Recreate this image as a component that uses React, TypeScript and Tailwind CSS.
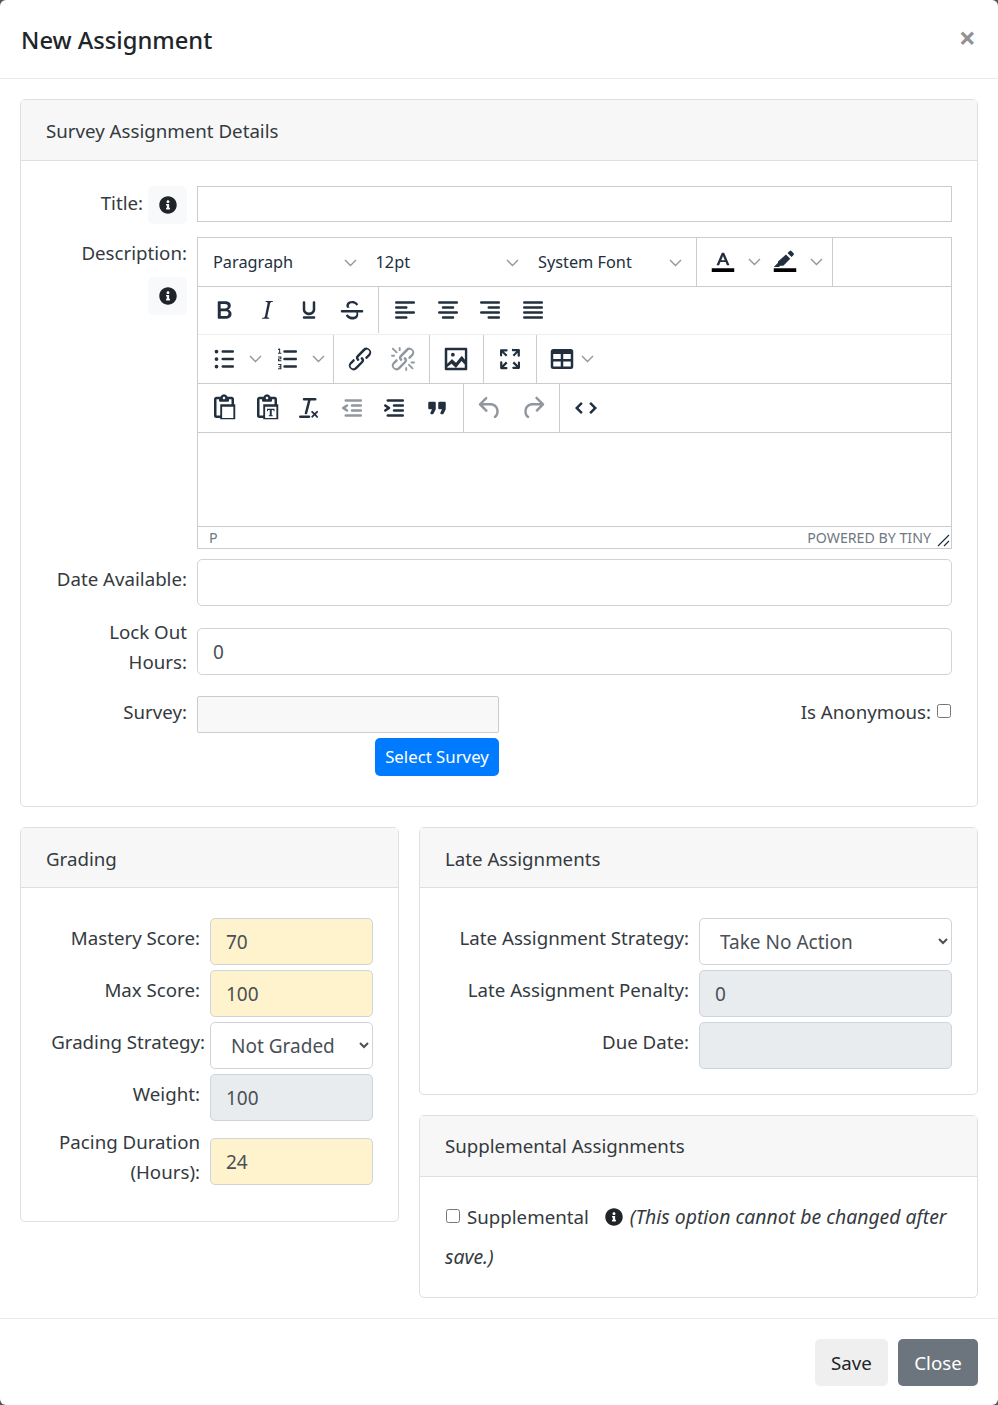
import type { ReactNode } from "react";
import { FaInfoCircle } from "react-icons/fa";

const paths: Record<string, string> = {
  bold: "M7.8 19c-.3 0-.5 0-.6-.2l-.2-.5V5.7c0-.2 0-.4.2-.5l.6-.2h5c1.500 0 2.700.3 3.500 1 .7.6 1.100 1.400 1.100 2.500a3 3 0 0 1-.6 1.900c-.4.6-1 1-1.600 1.200.4.1.9.3 1.300.6s.8.7 1 1.200c.4.4.5 1 .5 1.600 0 1.300-.4 2.300-1.300 3-.8.7-2.100 1-3.800 1H7.800zm5-8.300c.6 0 1.200-.1 1.600-.5.4-.3.6-.7.6-1.300 0-1.100-.8-1.700-2.300-1.700H9.300v3.500h3.500zm.5 6c.7 0 1.300-.1 1.700-.4.4-.4.6-.9.6-1.500s-.2-1-.7-1.400c-.4-.3-1-.4-2-.4H9.400v3.800h3.900z",
  italic: "M16.700 4.700l-.1.9h-.3c-.6 0-1 0-1.400.3-.3.3-.4.6-.5 1.100l-2.100 9.800v.6c0 .5.4.8 1.400.8h.2l-.2.8H8l.2-.8h.2c1.100 0 1.800-.5 2-1.500l2-9.800.1-.5c0-.6-.4-.8-1.400-.8h-.3l.2-.9h5.800z",
  underline: "M16 5c.6 0 1 .4 1 1v5.500a4 4 0 0 1-.4 1.800l-1 1.400a5.300 5.300 0 0 1-5.500 1 5 5 0 0 1-1.600-1c-.5-.4-.8-.9-1.100-1.400a4 4 0 0 1-.4-1.800V6c0-.6.4-1 1-1s1 .4 1 1v5.500c0 .3 0 .6.2 1l.6.7a3.300 3.300 0 0 0 2.200.8 3.400 3.400 0 0 0 2.200-.8c.3-.2.4-.5.6-.8l.2-.9V6c0-.6.4-1 1-1zM8 17h8c.6 0 1 .4 1 1s-.4 1-1 1H8a1 1 0 0 1 0-2z",
  strike: "M15.600 8.500c-.5-.7-1-1.100-1.300-1.300-.6-.4-1.300-.6-2-.6-2.700 0-2.800 1.700-2.800 2.100 0 .6.2 1.100.7 1.500H8.100c-.4-.5-.6-1-.6-1.600 0-.7.3-3.800 4.800-3.800 1.400 0 2.600.5 3.400 1.200.3.2.8.7 1.300 1.400l-1.400 1.100zM4 12h16c.6 0 1 .4 1 1s-.4 1-1 1h-3.300c.2.5.3 1 .3 1.500 0 1.400-.7 4.100-5 4.100A6.200 6.200 0 0 1 7 16.400l1.500-1.100c.4.6 1.600 2 3.700 2 1.600 0 2.500-.4 3-1 .3-.4.4-.9.4-1.300 0-.4-.1-.7-.3-1H4a1 1 0 0 1 0-2z",
  alignLeft: "M5 5h14c.6 0 1 .4 1 1s-.4 1-1 1H5a1 1 0 1 1 0-2zm0 4h8c.6 0 1 .4 1 1s-.4 1-1 1H5a1 1 0 1 1 0-2zm0 8h8c.6 0 1 .4 1 1s-.4 1-1 1H5a1 1 0 0 1 0-2zm0-4h14c.6 0 1 .4 1 1s-.4 1-1 1H5a1 1 0 0 1 0-2z",
  alignCenter: "M5 5h14c.6 0 1 .4 1 1s-.4 1-1 1H5a1 1 0 1 1 0-2zm3 4h8c.6 0 1 .4 1 1s-.4 1-1 1H8a1 1 0 1 1 0-2zm0 8h8c.6 0 1 .4 1 1s-.4 1-1 1H8a1 1 0 0 1 0-2zm-3-4h14c.6 0 1 .4 1 1s-.4 1-1 1H5a1 1 0 0 1 0-2z",
  alignRight: "M5 5h14c.6 0 1 .4 1 1s-.4 1-1 1H5a1 1 0 1 1 0-2zm6 4h8c.6 0 1 .4 1 1s-.4 1-1 1h-8a1 1 0 0 1 0-2zm0 8h8c.6 0 1 .4 1 1s-.4 1-1 1h-8a1 1 0 0 1 0-2zm-6-4h14c.6 0 1 .4 1 1s-.4 1-1 1H5a1 1 0 0 1 0-2z",
  justify: "M5 5h14c.6 0 1 .4 1 1s-.4 1-1 1H5a1 1 0 1 1 0-2zm0 4h14c.6 0 1 .4 1 1s-.4 1-1 1H5a1 1 0 1 1 0-2zm0 4h14c.6 0 1 .4 1 1s-.4 1-1 1H5a1 1 0 0 1 0-2zm0 4h14c.6 0 1 .4 1 1s-.4 1-1 1H5a1 1 0 0 1 0-2z",
  bullets: "M11 5h8c.6 0 1 .4 1 1s-.4 1-1 1h-8a1 1 0 0 1 0-2zm0 6h8c.6 0 1 .4 1 1s-.4 1-1 1h-8a1 1 0 0 1 0-2zm0 6h8c.6 0 1 .4 1 1s-.4 1-1 1h-8a1 1 0 0 1 0-2zM4.500 6a1.500 1.500 0 1 1 3 0 1.500 1.500 0 0 1-3 0zm0 6a1.500 1.500 0 1 1 3 0 1.500 1.500 0 0 1-3 0zm0 6a1.500 1.500 0 1 1 3 0 1.500 1.500 0 0 1-3 0z",
  numbers: "M10 5h9c.6 0 1 .4 1 1s-.4 1-1 1h-9a1 1 0 0 1 0-2zm0 6h9c.6 0 1 .4 1 1s-.4 1-1 1h-9a1 1 0 0 1 0-2zm0 6h9c.6 0 1 .4 1 1s-.4 1-1 1h-9a1 1 0 0 1 0-2zM5.500 3.500h1v3.500h1v.8H4.800V7h.9V4.500l-.9.3V4zM4.800 10h2.700v2.200H5.700v.7h1.800v.8H4.800v-2.200h1.800v-.7H4.800zM4.800 16h2.700v4.200H4.800v-.8h1.800v-.9H5.300v-.7h1.300v-1H4.800z",
  link: "M6.200 12.300a1 1 0 0 1 1.400 1.400l-2 2a2 2 0 1 0 2.600 2.800l4.800-4.800a1 1 0 0 0 0-1.400 1 1 0 1 1 1.400-1.300 2.900 2.900 0 0 1 0 4L9.600 20a3.900 3.900 0 0 1-5.500-5.500l2-2zm11.600-.6a1 1 0 0 1-1.400-1.400l2-2a2 2 0 1 0-2.600-2.800L11 10.300a1 1 0 0 0 0 1.400A1 1 0 1 1 9.600 13a2.900 2.900 0 0 1 0-4L14.400 4a3.900 3.900 0 0 1 5.500 5.500l-2 2z",
  unlink: "M6.200 12.300a1 1 0 0 1 1.400 1.400l-2.100 2a2 2 0 1 0 2.700 2.800l4.800-4.800a1 1 0 0 0 0-1.400 1 1 0 1 1 1.400-1.300 2.900 2.900 0 0 1 0 4L9.600 20a3.900 3.900 0 0 1-5.500-5.500l2-2zm11.600-.6a1 1 0 0 1-1.400-1.400l2.100-2a2 2 0 1 0-2.700-2.800L11 10.300a1 1 0 0 0 0 1.400A1 1 0 1 1 9.600 13a2.900 2.900 0 0 1 0-4L14.400 4a3.900 3.900 0 0 1 5.500 5.500l-2 2zM7.600 6.300a.8.8 0 0 1-1 1.100L3.300 4.200a.7.7 0 1 1 1-1l3.300 3.100zM5.100 8.600a.8.8 0 0 1 0 1.500H3a.8.8 0 0 1 0-1.500h2.100zm5-3.500a.8.8 0 0 1-1.500 0V3a.8.8 0 0 1 1.500 0v2.100zm6 11.800a.8.8 0 0 1 1-1l3.200 3.200a.8.8 0 0 1-1 1l-3.200-3.200zm-2.300 2a.8.8 0 0 1 1.500 0V21a.8.8 0 0 1-1.500 0v-2.100zm5-3.400a.7.7 0 1 1 0-1.500H21a.8.8 0 0 1 0 1.500h-2.200z",
  image: "M5 15.700l3.300-3.200c.3-.3.7-.3 1 0L12 15l4.100-5c.3-.4.8-.4 1 0l2 2.600V5H5v10.700zM5 18.300V19h14v-2.700l-2.600-2.800-4 5c-.3.4-.8.4-1 0l-3-2.800L5 18.300zM4 3h16c.6 0 1 .4 1 1v16c0 .6-.4 1-1 1H4a1 1 0 0 1-1-1V4c0-.6.4-1 1-1zm5.500 7a1.500 1.500 0 1 1 0-3 1.500 1.500 0 0 1 0 3z",
  fullscreen: "M15.300 10l-1.200-1.300 2.900-3h-2.300a.9.9 0 1 1 0-1.700H19c.5 0 .9.4.9.9v4.400a.9.9 0 1 1-1.800 0V7l-2.800 3zm0 4l3 2.900v-2.300a.9.9 0 0 1 1.700 0V19c0 .5-.4.9-.9.9h-4.400a.9.9 0 0 1 0-1.800H17l-3-2.800 1.300-1.300zM10 15.400l-2.900 3h2.300a.9.9 0 0 1 0 1.700H5a.9.9 0 0 1-.9-.9v-4.400a.9.9 0 1 1 1.800 0V17l2.800-3 1.300 1.400zM8.700 10L5.700 7v2.300a.9.9 0 0 1-1.700 0V5c0-.5.4-.9.9-.9h4.400a.9.9 0 0 1 0 1.800H7l3 2.800L8.700 10z",
  table: "M19 4a2 2 0 0 1 2 2v12a2 2 0 0 1-2 2H5a2 2 0 0 1-2-2V6c0-1.100.9-2 2-2h14zM5 14v4h6v-4H5zm14 0h-6v4h6v-4zm0-6h-6v4h6V8zM5 12h6V8H5v4z",
  paste: "M18 9V5h-2v1c0 .6-.4 1-1 1H9a1 1 0 0 1-1-1V5H6v13h3V9h9zM9 20H6a2 2 0 0 1-2-2V5c0-1.100.9-2 2-2h3.200A3 3 0 0 1 12 1a3 3 0 0 1 2.800 2H18a2 2 0 0 1 2 2v4h1v12H9v-1zm1.500-9v9h9v-9h-9zM12 3a1 1 0 0 0-1 1c0 .5.4 1 1 1s1-.5 1-1-.4-1-1-1z",
  pasteText: "M18 9V5h-2v1c0 .6-.4 1-1 1H9a1 1 0 0 1-1-1V5H6v13h3V9h9zM9 20H6a2 2 0 0 1-2-2V5c0-1.100.9-2 2-2h3.200A3 3 0 0 1 12 1a3 3 0 0 1 2.800 2H18a2 2 0 0 1 2 2v4h1v12H9v-1zm1.500-9v9h9v-9h-9zM12 3a1 1 0 0 0-1 1c0 .5.4 1 1 1s1-.5 1-1-.4-1-1-1zM12 12.500h6v2h-.8v-1h-1.400v4.200h.8v.8h-3.200v-.8h.8v-4.200h-1.400v1H12z",
  removeFormat: "M13.200 6a1 1 0 0 1 0 .2l-2.600 10a1 1 0 0 1-1 .8h-.2a.8.8 0 0 1-.8-1l2.600-10H8a1 1 0 1 1 0-2h9a1 1 0 0 1 0 2h-3.800zM5 18h7a1 1 0 0 1 0 2H5a1 1 0 0 1 0-2zm13 1.500L16.500 18 15 19.500a.7.7 0 0 1-1-1l1.500-1.500-1.500-1.500a.7.7 0 0 1 1-1l1.500 1.500 1.500-1.500a.7.7 0 0 1 1 1L17.500 17l1.500 1.500a.7.7 0 0 1-1 1z",
  outdent: "M7 5h12c.6 0 1 .4 1 1s-.4 1-1 1H7a1 1 0 1 1 0-2zm5 4h7c.6 0 1 .4 1 1s-.4 1-1 1h-7a1 1 0 0 1 0-2zm0 4h7c.6 0 1 .4 1 1s-.4 1-1 1h-7a1 1 0 0 1 0-2zm-5 4h12a1 1 0 0 1 0 2H7a1 1 0 0 1 0-2zm1.600-3.800a1 1 0 0 1-1.200 1.600l-3-2a1 1 0 0 1 0-1.600l3-2a1 1 0 0 1 1.200 1.600L6.800 12l1.800 1.200z",
  indent: "M7 5h12c.6 0 1 .4 1 1s-.4 1-1 1H7a1 1 0 1 1 0-2zm5 4h7c.6 0 1 .4 1 1s-.4 1-1 1h-7a1 1 0 0 1 0-2zm0 4h7c.6 0 1 .4 1 1s-.4 1-1 1h-7a1 1 0 0 1 0-2zm-5 4h12a1 1 0 0 1 0 2H7a1 1 0 0 1 0-2zm-2.600-3.800L6.200 12l-1.800-1.200a1 1 0 0 1 1.200-1.600l3 2a1 1 0 0 1 0 1.600l-3 2a1 1 0 1 1-1.200-1.600z",
  quote: "M7.500 17h.9c.4 0 .7-.2.9-.6L11 13V8c0-.6-.4-1-1-1H6a1 1 0 0 0-1 1v4c0 .6.4 1 1 1h2l-1.300 2.700a1 1 0 0 0 .8 1.300zm8 0h.9c.4 0 .7-.2.9-.6L19 13V8c0-.6-.4-1-1-1h-4a1 1 0 0 0-1 1v4c0 .6.4 1 1 1h2l-1.300 2.700a1 1 0 0 0 .8 1.300z",
  undo: "M6.400 8H12c3.700 0 6.200 2 6.800 5.100.6 2.700-.4 5.600-2.300 6.800a1 1 0 0 1-1-1.800c1.100-.6 1.800-2.700 1.400-4.600-.5-2.100-2.100-3.500-4.900-3.500H6.400l3.300 3.300a1 1 0 1 1-1.400 1.400l-5-5a1 1 0 0 1 0-1.400l5-5a1 1 0 0 1 1.400 1.400L6.400 8z",
  redo: "M17.600 10H12c-2.800 0-4.400 1.400-4.900 3.500-.4 2 .3 4 1.400 4.600a1 1 0 1 1-1 1.800c-2-1.200-2.900-4.100-2.300-6.800.6-3 3-5.100 6.800-5.100h5.600l-3.300-3.300a1 1 0 1 1 1.400-1.400l5 5a1 1 0 0 1 0 1.400l-5 5a1 1 0 0 1-1.400-1.400l3.300-3.300z",
  code: "M9.400 8.600L6 12l3.400 3.400-1.400 1.400L3.200 12 8 7.200zm5.200 0L18 12l-3.400 3.400 1.400 1.400 4.800-4.800L16 7.200z",
  textColor: "M12.900 4.500l4.300 10h-2.100l-1-2.500H9.900l-1 2.500H6.800l4.300-10h1.800zm.5 6L12 7.100l-1.400 3.400h2.800z",
  highlight: "M15.500 3.300a1.300 1.300 0 0 1 1.800 0l1.400 1.400a1.300 1.300 0 0 1 0 1.800l-1.500 1.500-3.200-3.200zM12.800 6l3.400 3.400-5.600 5.600H8.200l-1 1H3l3.400-3.400v-1z",
};

const Icon = ({ name, muted, bar }: { name: string; muted?: boolean; bar?: boolean }) => (
  <svg viewBox="0 0 24 24" className={`h-[30px] w-[30px] ${muted ? "text-[#222f3e]/50" : "text-[#222f3e]"}`} fill="currentColor" fillRule="evenodd">
    <path d={paths[name]} />
    {bar && <path d="M3 17h18v3H3z" fill="#000000" />}
  </svg>
);

const Chevron = () => (
  <svg viewBox="0 0 13 8" className="h-[8px] w-[13px] text-[#222f3e]/50" fill="none" stroke="currentColor" strokeWidth="1.4">
    <path d="M1 1l5.500 5.500L12 1" />
  </svg>
);

const Btn = ({ name, muted }: { name: string; muted?: boolean }) => (
  <span className="flex h-[42px] w-[42.5px] items-center justify-center">
    <Icon name={name} muted={muted} />
  </span>
);

const SplitBtn = ({ name, bar }: { name: string; bar?: boolean }) => (
  <span className="flex h-[42px] w-[62.5px] items-center">
    <span className="flex w-[42.5px] justify-center">
      <Icon name={name} bar={bar} />
    </span>
    <span className="flex w-[20px] justify-center">
      <Chevron />
    </span>
  </span>
);

const Group = ({ children, last }: { children: ReactNode; last?: boolean }) => (
  <div className={`flex items-center px-[5px] ${last ? "" : "border-r border-[#cccccc]"}`}>{children}</div>
);

const FontSelect = ({ label }: { label: string }) => (
  <span className="flex w-[162.5px] items-center justify-between pt-[1px] pl-[10px] pr-[9px] text-[16.3px] text-[#222f3e]">
    {label}
    <Chevron />
  </span>
);

const Label = ({ children, className = "" }: { children: ReactNode; className?: string }) => (
  <label className={`block text-right text-[18.7px] leading-[30px] text-[#343a40] ${className}`}>{children}</label>
);

const inputClass = "block h-[47px] w-full rounded-[5px] border border-[#ced4da] px-[15px] text-[19px] text-[#495057] outline-none";
const selectClass = "block h-[47px] rounded-[5px] border border-[#ced4da] bg-white pl-[16px] pr-[7px] text-[19px] text-[#495057] outline-none";

const Card = ({ title, children, className = "", headerClass = "h-[60px] pt-[3px]" }: { title: string; children: ReactNode; className?: string; headerClass?: string }) => (
  <section className={`rounded-[5px] border border-[#dfdfdf] bg-white ${className}`}>
    <h2 className={`flex items-center border-b border-[#dfdfdf] bg-[#f7f7f7] px-[25px] text-[18.7px] font-normal text-[#343a40] ${headerClass}`}>{title}</h2>
    {children}
  </section>
);

const FieldRow = ({ label, labelWidth, children, className = "" }: { label: ReactNode; labelWidth: string; children: ReactNode; className?: string }) => (
  <div className={`flex items-start ${className}`}>
    <div className={`${labelWidth} pt-[5px]`}>
      <Label>{label}</Label>
    </div>
    {children}
  </div>
);

const InfoButton = ({ className = "" }: { className?: string }) => (
  <span className={`flex h-[38px] w-[39px] items-center justify-center rounded-[5px] bg-[#f8f9fa] text-[#212529] ${className}`}>
    <FaInfoCircle className="h-[18px] w-[18px]" />
  </span>
);

export default function App() {
  return (
    <div className="min-h-[1405px] bg-[#555555] font-['Noto_Sans',sans-serif]">
      <div className="h-[1405px] rounded-[6px] bg-white">
        <header className="flex h-[79px] items-start justify-between border-b border-[#e9ecef] pl-[21px] pr-[22px]">
          <h1 className="mt-[21px] text-[23.7px] leading-[38px] font-medium text-[#212529]">New Assignment</h1>
          <span className="mt-[17px] text-[30px] leading-[42px] font-bold text-[#212529]/50">×</span>
        </header>

        <main className="px-[20px] pt-[20px]">
          <Card title="Survey Assignment Details" headerClass="h-[61px] pt-[2px]">
            <div className="px-[25px] pt-[25px] pb-[30px]">
              <div className="mb-[13px] flex items-start">
                <div className="w-[97px] pt-[2px]">
                  <Label>Title:</Label>
                </div>
                <InfoButton className="ml-[5px]" />
                <input className="ml-[10px] h-[36px] flex-1 border border-[#cccccc] outline-none" />
              </div>

              <div className="mb-[10px] flex items-start">
                <div className="flex w-[141px] flex-col items-end pt-[1px]">
                  <Label>Description:</Label>
                  <InfoButton className="mt-[9px]" />
                </div>
                <div className="ml-[10px] flex h-[312px] flex-1 flex-col border border-[#cccccc]">
                  <div className="flex h-[49px] border-b border-[#cccccc]">
                    <Group>
                      <FontSelect label="Paragraph" />
                      <FontSelect label="12pt" />
                      <FontSelect label="System Font" />
                    </Group>
                    <Group>
                      <SplitBtn name="textColor" bar />
                      <SplitBtn name="highlight" bar />
                    </Group>
                  </div>
                  <div className="flex h-[48px] border-b border-[#eeeeee] pb-[1px]">
                    <Group>
                      <Btn name="bold" />
                      <Btn name="italic" />
                      <Btn name="underline" />
                      <Btn name="strike" />
                    </Group>
                    <Group last>
                      <Btn name="alignLeft" />
                      <Btn name="alignCenter" />
                      <Btn name="alignRight" />
                      <Btn name="justify" />
                    </Group>
                  </div>
                  <div className="flex h-[49px] border-b border-[#cccccc]">
                    <Group>
                      <SplitBtn name="bullets" />
                      <SplitBtn name="numbers" />
                    </Group>
                    <Group>
                      <Btn name="link" />
                      <Btn name="unlink" muted />
                    </Group>
                    <Group>
                      <Btn name="image" />
                    </Group>
                    <Group>
                      <Btn name="fullscreen" />
                    </Group>
                    <Group last>
                      <span className="flex h-[42px] w-[56px] items-center">
                        <span className="-ml-[1px] flex w-[42.5px] justify-center">
                          <Icon name="table" />
                        </span>
                        <span className="-ml-[3px]">
                          <Chevron />
                        </span>
                      </span>
                    </Group>
                  </div>
                  <div className="flex h-[49px] border-b border-[#cccccc]">
                    <Group>
                      <Btn name="paste" />
                      <Btn name="pasteText" />
                      <Btn name="removeFormat" />
                      <Btn name="outdent" muted />
                      <Btn name="indent" />
                      <Btn name="quote" />
                    </Group>
                    <Group>
                      <Btn name="undo" muted />
                      <Btn name="redo" muted />
                    </Group>
                    <Group last>
                      <Btn name="code" />
                    </Group>
                  </div>
                  <div className="flex-1" />
                  <div className="flex h-[22px] items-center justify-between border-t border-[#cccccc] pl-[11px] text-[14.2px] text-[#6f7780]">
                    <span>P</span>
                    <span className="flex items-center">
                      <span className="mr-[4px]">POWERED BY TINY</span>
                      <svg viewBox="0 0 16 16" className="h-[16px] w-[16px] self-end text-[#222f3e]" fill="none" stroke="currentColor" strokeWidth="1.2">
                        <path d="M3 14L14 3M9 14l5-5" />
                      </svg>
                    </span>
                  </div>
                </div>
              </div>

              <FieldRow label="Date Available:" labelWidth="w-[141px]" className="mb-[22px]">
                <input className={`ml-[10px] flex-1 ${inputClass}`} />
              </FieldRow>

              <div className="mb-[21px] flex items-start">
                <div className="h-[47px] w-[141px] -translate-y-[11px]">
                  <Label>
                    Lock Out
                    <br />
                    Hours:
                  </Label>
                </div>
                <input className={`ml-[10px] flex-1 ${inputClass}`} defaultValue="0" />
              </div>

              <div className="flex items-start">
                <div className="w-[141px] pt-[1px]">
                  <Label>Survey:</Label>
                </div>
                <div className="ml-[10px] w-[302px]">
                  <input className="block h-[37px] w-full rounded-[2px] border border-[#cccccc] bg-[#f8f8f8] outline-none" disabled />
                  <div className="mt-[5px] flex justify-end">
                    <button className="h-[38px] w-[124px] rounded-[5px] bg-[#007bff] text-[16.8px] text-white">Select Survey</button>
                  </div>
                </div>
                <div className="flex flex-1 items-start justify-end pt-[1px]">
                  <Label>Is Anonymous:</Label>
                  <input type="checkbox" className="mt-[7px] mr-[1px] ml-[6px] h-[14px] w-[14px]" />
                </div>
              </div>
            </div>
          </Card>

          <div className="mt-[20px] flex items-start gap-[20px]">
            <Card title="Grading" className="w-[379px]">
              <div className="px-[25px] pt-[30px] pb-[36px]">
                <FieldRow label="Mastery Score:" labelWidth="w-[154px]" className="mb-[5px]">
                  <input className={`ml-[10px] flex-1 bg-[#fff3cd] ${inputClass}`} defaultValue="70" />
                </FieldRow>
                <FieldRow label="Max Score:" labelWidth="w-[154px]" className="mb-[5px]">
                  <input className={`ml-[10px] flex-1 bg-[#fff3cd] ${inputClass}`} defaultValue="100" />
                </FieldRow>
                <div className="mb-[5px] flex items-start">
                  <div className="w-[159px] pt-[5px]">
                    <Label className="whitespace-nowrap">Grading Strategy:</Label>
                  </div>
                  <select className={`ml-[5px] flex-1 ${selectClass}`} defaultValue="Not Graded">
                    <option>Not Graded</option>
                  </select>
                </div>
                <FieldRow label="Weight:" labelWidth="w-[154px]" className="mb-[17px]">
                  <input className={`ml-[10px] flex-1 bg-[#e9ecef] ${inputClass}`} defaultValue="100" disabled />
                </FieldRow>
                <div className="flex items-start">
                  <div className="h-[47px] w-[154px] -translate-y-[11px]">
                    <Label>
                      Pacing Duration
                      <br />
                      (Hours):
                    </Label>
                  </div>
                  <input className={`ml-[10px] flex-1 bg-[#fff3cd] ${inputClass}`} defaultValue="24" />
                </div>
              </div>
            </Card>

            <div className="flex flex-1 flex-col gap-[20px]">
              <Card title="Late Assignments">
                <div className="px-[25px] pt-[30px] pb-[25px]">
                  <FieldRow label="Late Assignment Strategy:" labelWidth="w-[244px]" className="mb-[5px]">
                    <select className={`ml-[10px] flex-1 ${selectClass}`} defaultValue="Take No Action">
                      <option>Take No Action</option>
                    </select>
                  </FieldRow>
                  <FieldRow label="Late Assignment Penalty:" labelWidth="w-[244px]" className="mb-[5px]">
                    <input className={`ml-[10px] flex-1 bg-[#e9ecef] ${inputClass}`} defaultValue="0" disabled />
                  </FieldRow>
                  <FieldRow label="Due Date:" labelWidth="w-[244px]">
                    <input className={`ml-[10px] flex-1 bg-[#e9ecef] ${inputClass}`} disabled />
                  </FieldRow>
                </div>
              </Card>
              <Card title="Supplemental Assignments" headerClass="h-[61px]">
                <p className="px-[25px] pt-[20px] pb-[20px] text-[18.7px] leading-[40px] text-[#343a40]">
                  <input type="checkbox" className="mr-[7px] ml-[1px] h-[14px] w-[14px] align-[1px]" />
                  Supplemental
                  <FaInfoCircle className="mr-[7px] ml-[16px] inline h-[18px] w-[18px] align-[-2px] text-[#212529]" />
                  <em className="text-[19.4px]">(This option cannot be changed after save.)</em>
                </p>
              </Card>
            </div>
          </div>
        </main>

        <footer className="mt-[20px] flex justify-end gap-[10px] border-t border-[#e9ecef] px-[20px] pt-[20px]">
          <button className="h-[47px] w-[73px] rounded-[5px] bg-[#efefef] pt-[1px] text-[18.7px] text-[#212529]">Save</button>
          <button className="h-[47px] w-[80px] rounded-[5px] bg-[#6c757d] pt-[1px] text-[18.7px] text-white">Close</button>
        </footer>
      </div>
    </div>
  );
}
